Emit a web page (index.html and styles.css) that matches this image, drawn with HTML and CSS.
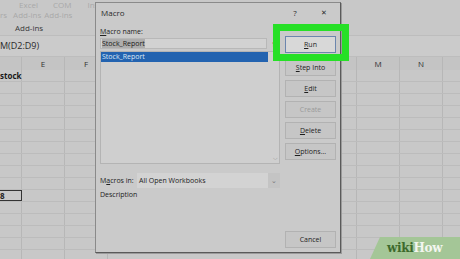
FILE: index.html
```html
<!DOCTYPE html>
<html>
<head>
<meta charset="utf-8">
<link rel="stylesheet" href="styles.css">
</head>
<body>
<div class="sheet">
  <div class="ribbon">
    <div class="rib-row faint"><span class="t1">Excel</span><span class="t2">COM</span><span class="t3">Inse</span></div>
    <div class="rib-row faint"><span class="t0">rs</span><span class="t4">Add-ins</span><span class="t5">Add-ins</span></div>
    <div class="rib-row strong"><span class="t6">Add-ins</span></div>
  </div>
  <div class="formula">M(D2:D9)</div>
  <div class="grid">
    <div class="hdr">
      <div class="c c0"></div><div class="c ce">E</div><div class="c cf">F</div><div class="c cmid"></div><div class="c cm">M</div><div class="c cn">N</div><div class="c crest"></div>
    </div>
    <div class="row"><div class="c c0 bold">stock</div><div class="c ce"></div><div class="c cf"></div><div class="c cmid"></div><div class="c cm"></div><div class="c cn"></div><div class="c crest"></div></div>
    <div class="row"><div class="c c0"></div><div class="c ce"></div><div class="c cf"></div><div class="c cmid"></div><div class="c cm"></div><div class="c cn"></div><div class="c crest"></div></div>
    <div class="row"><div class="c c0"></div><div class="c ce"></div><div class="c cf"></div><div class="c cmid"></div><div class="c cm"></div><div class="c cn"></div><div class="c crest"></div></div>
    <div class="row"><div class="c c0"></div><div class="c ce"></div><div class="c cf"></div><div class="c cmid"></div><div class="c cm"></div><div class="c cn"></div><div class="c crest"></div></div>
    <div class="row"><div class="c c0"></div><div class="c ce"></div><div class="c cf"></div><div class="c cmid"></div><div class="c cm"></div><div class="c cn"></div><div class="c crest"></div></div>
    <div class="row"><div class="c c0"></div><div class="c ce"></div><div class="c cf"></div><div class="c cmid"></div><div class="c cm"></div><div class="c cn"></div><div class="c crest"></div></div>
    <div class="row"><div class="c c0"></div><div class="c ce"></div><div class="c cf"></div><div class="c cmid"></div><div class="c cm"></div><div class="c cn"></div><div class="c crest"></div></div>
    <div class="row"><div class="c c0"></div><div class="c ce"></div><div class="c cf"></div><div class="c cmid"></div><div class="c cm"></div><div class="c cn"></div><div class="c crest"></div></div>
    <div class="row"><div class="c c0"></div><div class="c ce"></div><div class="c cf"></div><div class="c cmid"></div><div class="c cm"></div><div class="c cn"></div><div class="c crest"></div></div>
    <div class="row"><div class="c c0"></div><div class="c ce"></div><div class="c cf"></div><div class="c cmid"></div><div class="c cm"></div><div class="c cn"></div><div class="c crest"></div></div>
    <div class="row"><div class="c c0 sel">8</div><div class="c ce"></div><div class="c cf"></div><div class="c cmid"></div><div class="c cm"></div><div class="c cn"></div><div class="c crest"></div></div>
    <div class="row"><div class="c c0"></div><div class="c ce"></div><div class="c cf"></div><div class="c cmid"></div><div class="c cm"></div><div class="c cn"></div><div class="c crest"></div></div>
    <div class="row"><div class="c c0"></div><div class="c ce"></div><div class="c cf"></div><div class="c cmid"></div><div class="c cm"></div><div class="c cn"></div><div class="c crest"></div></div>
    <div class="row"><div class="c c0"></div><div class="c ce"></div><div class="c cf"></div><div class="c cmid"></div><div class="c cm"></div><div class="c cn"></div><div class="c crest"></div></div>
    <div class="row"><div class="c c0"></div><div class="c ce"></div><div class="c cf"></div><div class="c cmid"></div><div class="c cm"></div><div class="c cn"></div><div class="c crest"></div></div>
    <div class="row"><div class="c c0"></div><div class="c ce"></div><div class="c cf"></div><div class="c cmid"></div><div class="c cm"></div><div class="c cn"></div><div class="c crest"></div></div>
  </div>
</div>

<div class="dialog">
  <div class="titlebar">
    <span class="title">Macro</span>
    <span class="tb-help">?</span>
    <span class="tb-close">&#x2715;</span>
  </div>
  <div class="main">
    <div class="leftcol">
      <div class="label"><u>M</u>acro name:</div>
      <div class="inputrow">
        <div class="input"><span class="hl">Stock_Report</span></div>
        <div class="pick">&#x2191;</div>
      </div>
      <div class="list">
        <div class="item selected">Stock_Report</div>
        <div class="scroll-arrow">&#x2335;</div>
      </div>
      <div class="macrosin">
        <span class="label">M<u>a</u>cros in:</span>
        <div class="select"><span>All Open Workbooks</span><span class="chev">&#x2304;</span></div>
      </div>
      <div class="label desc">Description</div>
    </div>
    <div class="rightcol">
      <div class="btn run"><u>R</u>un</div>
      <div class="btn step"><u>S</u>tep Into</div>
      <div class="btn"><u>E</u>dit</div>
      <div class="btn disabled">Create</div>
      <div class="btn"><u>D</u>elete</div>
      <div class="btn"><u>O</u>ptions...</div>
      <div class="btn cancel">Cancel</div>
    </div>
  </div>
</div>

<div class="highlight"></div>

<div class="watermark"><span class="wiki">wiki</span><span class="how">How</span></div>
</body>
</html>
```

FILE: styles.css
```css
html, body {
  margin: 0;
  padding: 0;
}
body {
  width: 460px;
  height: 259px;
  overflow: hidden;
  position: relative;
  background: #c8c8c8;
  font-family: "Open Sans", "Noto Sans", sans-serif;
  color: #222;
}

/* background spreadsheet */
.sheet {
  display: flex;
  flex-direction: column;
}
.ribbon {
  height: 35px;
  border-bottom: 1px solid #bdbdbd;
  font-size: 8px;
  line-height: 10px;
}
.rib-row {
  display: flex;
  height: 10px;
  white-space: nowrap;
}
.rib-row.faint { color: #a8a8a8; }
.rib-row.strong { color: #3a3a3a; margin-top: 3px; }
.t1 { margin-left: 19px; }
.t2 { margin-left: 15px; }
.t3 { margin-left: 16px; }
.t0 { margin-left: 0; }
.t4 { margin-left: 6px; }
.t5 { margin-left: 3px; }
.t6 { margin-left: 15px; }
.formula {
  height: 20px;
  line-height: 20px;
  font-size: 9px;
  color: #2a2a2a;
  border-bottom: 1px solid #bdbdbd;
  background: #cbcbcb;
}
.grid {
  display: flex;
  flex-direction: column;
}
.hdr, .row {
  display: flex;
  height: 12px;
}
.hdr {
  height: 13px;
  background: #c4c4c4;
  font-size: 8px;
  line-height: 13px;
  color: #333;
}
.row {
  border-bottom: 1px solid #bcbcbc;
  height: 11px;
  font-size: 8px;
  line-height: 11px;
}
.c {
  border-right: 1px solid #b7b7b7;
  box-sizing: border-box;
  text-align: center;
  flex: none;
}
.c0 { width: 22px; text-align: left; }
.ce, .cf { width: 43px; }
.cmid { width: 249px; }
.cm, .cn { width: 43px; }
.crest { flex: 1; border-right: none; }
.bold { font-weight: 700; color: #1a1a1a; }
.sel {
  border: 1px solid #333;
  border-left: none;
  font-weight: 700;
  line-height: 9px;
}

/* dialog */
.dialog {
  position: absolute;
  left: 95px;
  top: 2px;
  width: 246px;
  height: 251px;
  box-sizing: border-box;
  background: #cacaca;
  border: 1px solid #8a8a8a;
  border-right-color: #5a5a5a;
  border-bottom-color: #5a5a5a;
  box-shadow: 1px 1px 0 #9a9a9a;
  display: flex;
  flex-direction: column;
  font-size: 7px;
  padding: 0 4px 0 4px;
}
.titlebar {
  height: 19px;
  display: flex;
  align-items: center;
  font-size: 8px;
  color: #2a2a2a;
}
.title { margin-left: 1px; flex: 1; }
.tb-help { width: 10px; margin-right: 19px; text-align: center; }
.tb-close { width: 10px; margin-right: 7px; font-size: 7px; text-align: center; }
.main {
  flex: 1;
  display: grid;
  grid-template-columns: 180px 51px;
  column-gap: 5px;
}
.leftcol {
  display: flex;
  flex-direction: column;
}
.label {
  line-height: 10px;
  height: 10px;
  color: #222;
}
.leftcol > .label:first-child { margin-top: 5px; }
.inputrow {
  display: flex;
  margin-top: 1px;
  height: 11px;
}
.input {
  width: 167px;
  box-sizing: border-box;
  background: #d2d2d2;
  border: 1px solid #b8b8b8;
  line-height: 9px;
  padding-left: 1px;
}
.hl {
  background: #adadad;
  color: #1a1a1a;
}
.pick {
  flex: 1;
  font-weight: 700;
  font-size: 9px;
  line-height: 11px;
  text-align: center;
  color: #111;
}
.list {
  margin-top: 2px;
  height: 113px;
  box-sizing: border-box;
  background: #cfcfcf;
  border: 1px solid #b4b4b4;
  position: relative;
}
.item.selected {
  width: 167px;
  height: 10px;
  line-height: 10px;
  background: #2363b0;
  color: #dce8f5;
  padding-left: 1px;
  box-sizing: border-box;
}
.scroll-arrow {
  position: absolute;
  right: 1px;
  bottom: 1px;
  font-size: 6px;
  color: #888;
  line-height: 8px;
}
.macrosin {
  margin-top: 9px;
  display: flex;
  align-items: center;
  height: 15px;
}
.macrosin .label { width: 37px; }
.select {
  flex: 1;
  height: 15px;
  line-height: 15px;
  background: #d3d3d3;
  display: flex;
  padding-left: 2px;
}
.select span:first-child { flex: 1; }
.chev {
  width: 12px;
  background: #c4c4c4;
  text-align: center;
  color: #777;
  font-size: 7px;
}
.desc { margin-top: 2px; }

.rightcol {
  display: flex;
  flex-direction: column;
  gap: 4px;
  padding-bottom: 4px;
}
.btn {
  height: 17px;
  line-height: 15px;
  box-sizing: border-box;
  background: #c6c6c6;
  border: 1px solid #b2b2b2;
  text-align: center;
  color: #1e1e1e;
  flex: none;
}
.run {
  margin-top: 14px;
  background: #d8d8d8;
  border: 1px solid #6c86ad;
}
.step { margin-top: 2px; }
.disabled { color: #9a9a9a; }
.cancel { margin-top: auto; }

/* green highlight */
.highlight {
  position: absolute;
  left: 273px;
  top: 24px;
  width: 76px;
  height: 37px;
  box-sizing: border-box;
  border: 7px solid #26e026;
}

/* watermark */
.watermark {
  position: absolute;
  right: 0;
  bottom: 0;
  width: 90px;
  height: 22px;
  background: #a4c697;
  clip-path: polygon(10px 0, 100% 0, 100% 100%, 0 100%);
  font-family: "DejaVu Serif", serif;
  font-weight: 700;
  font-size: 12px;
  line-height: 22px;
  padding-left: 17px;
  box-sizing: border-box;
  letter-spacing: -0.3px;
}
.wiki { color: #3d6a2c; }
.how { color: #f3f6f0; }
```
